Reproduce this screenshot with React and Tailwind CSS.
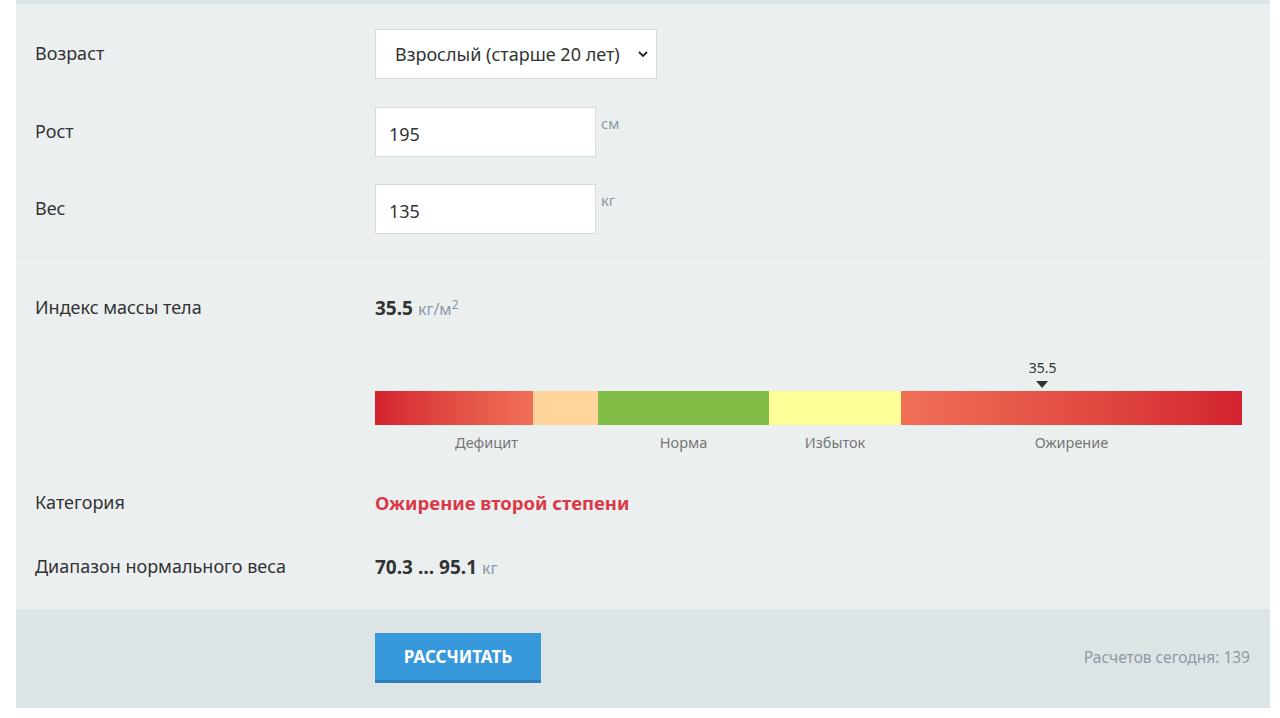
import React, { useState } from 'react';

const font = { fontFamily: '"Noto Sans", "Open Sans", sans-serif' };

function Row({ label, children, className = '' }) {
    return (
        <div className={`flex items-start ${className}`}>
            <div className="w-[359px] shrink-0 pl-[19px] text-[18px] text-[#333]">{label}</div>
            <div className="flex-1">{children}</div>
        </div>
    );
}

function BmiScale({ value }) {
    const pos = 77; // percent along the bar
    return (
        <div className="w-[867px]">
            {/* marker */}
            <div className="relative h-[46px]">
                <div className="absolute top-[14px] -translate-x-1/2 flex flex-col items-center" style={{ left: `${pos}%` }}>
                    <span className="text-[14px] leading-[18px] text-[#333]">{value}</span>
                    <span className="mt-[4px] w-0 h-0 border-l-[6px] border-r-[6px] border-t-[7px] border-l-transparent border-r-transparent border-t-[#333]" />
                </div>
            </div>
            {/* bar */}
            <div className="flex h-[34px]">
                <div className="w-[158px] bg-gradient-to-r from-[#d3202f] to-[#f06f57]" />
                <div className="w-[65px] bg-[#ffd59b]" />
                <div className="w-[171px] bg-[#82be47]" />
                <div className="w-[132px] bg-[#ffff99]" />
                <div className="flex-1 bg-gradient-to-r from-[#f06f57] to-[#d3202f]" />
            </div>
            {/* labels */}
            <div className="flex mt-[7px] text-[14.5px] text-[#777]">
                <div className="w-[223px] text-center">Дефицит</div>
                <div className="w-[171px] text-center">Норма</div>
                <div className="w-[132px] text-center">Избыток</div>
                <div className="flex-1 text-center">Ожирение</div>
            </div>
        </div>
    );
}

export default function App() {
    const [age, setAge] = useState('adult');
    const [height, setHeight] = useState('195');
    const [weight, setWeight] = useState('135');

    return (
        <div className="min-h-[718px] bg-white" style={font}>
            <div className="ml-[16px] w-[1254px] bg-[#ebeff0]">
                <div className="h-[4px] bg-[#dde4e7]" />

                {/* inputs */}
                <div className="pt-[25px] pb-[28px] flex flex-col gap-[27px] border-b border-[#f7f9f9]">
                    <Row label={<span className="block pt-[11px]">Возраст</span>}>
                        <div className="relative w-[282px]">
                            <select
                                value={age}
                                onChange={(e) => setAge(e.target.value)}
                                className="w-full h-[50px] appearance-none bg-white border border-[#d5dadc] pl-[19px] pr-[36px] text-[18px] text-[#333] outline-none"
                            >
                                <option value="adult">Взрослый (старше 20 лет)</option>
                                <option value="child">Ребенок (до 20 лет)</option>
                            </select>
                            <svg className="absolute right-[8px] top-[19px] pointer-events-none" width="12" height="12" viewBox="0 0 12 12">
                                <path d="M2 4l4 4 4-4" fill="none" stroke="#222" strokeWidth="1.8" />
                            </svg>
                        </div>
                    </Row>
                    <Row label={<span className="block pt-[11px]">Рост</span>} className="mt-[1px]">
                        <div className="flex items-start gap-[5px]">
                            <input
                                value={height}
                                onChange={(e) => setHeight(e.target.value)}
                                className="w-[221px] h-[50px] bg-white border border-[#d5dadc] px-[13px] pt-[4px] text-[18px] text-[#333] outline-none"
                            />
                            <span className="text-[14.5px] text-[#8a98a5] pt-[6px]">см</span>
                        </div>
                    </Row>
                    <Row label={<span className="block pt-[11px]">Вес</span>}>
                        <div className="flex items-start gap-[5px]">
                            <input
                                value={weight}
                                onChange={(e) => setWeight(e.target.value)}
                                className="w-[221px] h-[50px] bg-white border border-[#d5dadc] px-[13px] pt-[4px] text-[18px] text-[#333] outline-none"
                            />
                            <span className="text-[14.5px] text-[#8a98a5] pt-[6px]">кг</span>
                        </div>
                    </Row>
                </div>

                {/* results */}
                <div className="pt-[31px] pb-[27px]">
                    <Row label="Индекс массы тела">
                        <div className="text-[19px] text-[#333]">
                            <span className="font-bold">35.5</span>{' '}
                            <span className="text-[16px] text-[#8a98a5]">кг/м<sup className="text-[12px]">2</sup></span>
                        </div>
                    </Row>
                    <div className="pl-[359px] mt-[22px]">
                        <BmiScale value="35.5" />
                    </div>
                    <Row label="Категория" className="mt-[36px]">
                        <div className="text-[18.5px] font-bold text-[#d83a47]">Ожирение второй степени</div>
                    </Row>
                    <Row label="Диапазон нормального веса" className="mt-[36px]">
                        <div className="text-[19px] text-[#333]">
                            <span className="font-bold">70.3 … 95.1</span>{' '}
                            <span className="text-[16px] text-[#8a98a5]">кг</span>
                        </div>
                    </Row>
                </div>

                {/* footer */}
                <div className="bg-[#dde4e6] h-[99px] flex items-center pl-[359px] pr-[20px]">
                    <button className="w-[166px] h-[50px] bg-[#3799dc] border-b-[3px] border-[#2a7fbf] text-white font-bold text-[17px]">
                        РАССЧИТАТЬ
                    </button>
                    <div className="ml-auto text-[15.5px] text-[#8d9aa5]">Расчетов сегодня: 139</div>
                </div>
            </div>
        </div>
    );
}
